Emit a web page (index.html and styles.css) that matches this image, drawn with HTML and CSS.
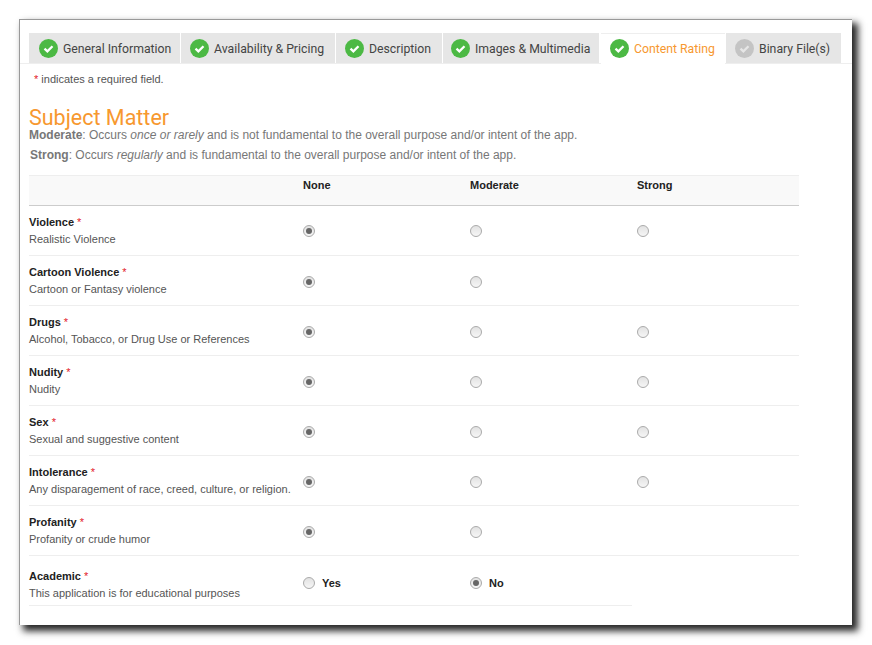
FILE: index.html
```html
<!DOCTYPE html>
<html lang="en">
<head>
    <meta charset="UTF-8">
    <title>Content Rating</title>
    <link rel="stylesheet" href="styles.css">
</head>
<body>
    <div class="window">
        <div class="tabs">
            <div class="tab tab-general"><svg class="check" viewBox="0 0 20 20"><circle cx="10" cy="10" r="10" fill="#4cb944"/><path d="M5.8 10.2l3 2.8 5.4-5.4" fill="none" stroke="#fff" stroke-width="2.4"/></svg>General Information</div>
            <div class="tab tab-pricing"><svg class="check" viewBox="0 0 20 20"><circle cx="10" cy="10" r="10" fill="#4cb944"/><path d="M5.8 10.2l3 2.8 5.4-5.4" fill="none" stroke="#fff" stroke-width="2.4"/></svg>Availability &amp; Pricing</div>
            <div class="tab tab-description"><svg class="check" viewBox="0 0 20 20"><circle cx="10" cy="10" r="10" fill="#4cb944"/><path d="M5.8 10.2l3 2.8 5.4-5.4" fill="none" stroke="#fff" stroke-width="2.4"/></svg>Description</div>
            <div class="tab tab-images"><svg class="check" viewBox="0 0 20 20"><circle cx="10" cy="10" r="10" fill="#4cb944"/><path d="M5.8 10.2l3 2.8 5.4-5.4" fill="none" stroke="#fff" stroke-width="2.4"/></svg>Images &amp; Multimedia</div>
            <div class="tab tab-rating active"><svg class="check" viewBox="0 0 20 20"><circle cx="10" cy="10" r="10" fill="#4cb944"/><path d="M5.8 10.2l3 2.8 5.4-5.4" fill="none" stroke="#fff" stroke-width="2.4"/></svg>Content Rating</div>
            <div class="tab tab-binary"><svg class="check" viewBox="0 0 20 20"><circle cx="10" cy="10" r="10" fill="#c4c4c4"/><path d="M5.8 10.2l3 2.8 5.4-5.4" fill="none" stroke="#e6e6e6" stroke-width="2.4"/></svg>Binary File(s)</div>
        </div>

        <div class="content">
            <p class="required-note"><span class="req">*</span> indicates a required field.</p>
            <h2>Subject Matter</h2>
            <p class="legend legend-moderate"><b>Moderate</b>: Occurs <i>once or rarely</i> and is not fundamental to the overall purpose and/or intent of the app.</p>
            <p class="legend legend-strong"><b>Strong</b>: Occurs <i>regularly</i> and is fundamental to the overall purpose and/or intent of the app.</p>

            <div class="rating-table">
                <div class="row head">
                    <div></div>
                    <div>None</div>
                    <div>Moderate</div>
                    <div>Strong</div>
                </div>

                <div class="row">
                    <div class="subject"><b>Violence <span class="req">*</span></b><span>Realistic Violence</span></div>
                    <div class="cell"><span class="radio on"></span></div>
                    <div class="cell"><span class="radio"></span></div>
                    <div class="cell"><span class="radio"></span></div>
                </div>
                <div class="row">
                    <div class="subject"><b>Cartoon Violence <span class="req">*</span></b><span>Cartoon or Fantasy violence</span></div>
                    <div class="cell"><span class="radio on"></span></div>
                    <div class="cell"><span class="radio"></span></div>
                    <div class="cell"></div>
                </div>
                <div class="row">
                    <div class="subject"><b>Drugs <span class="req">*</span></b><span>Alcohol, Tobacco, or Drug Use or References</span></div>
                    <div class="cell"><span class="radio on"></span></div>
                    <div class="cell"><span class="radio"></span></div>
                    <div class="cell"><span class="radio"></span></div>
                </div>
                <div class="row">
                    <div class="subject"><b>Nudity <span class="req">*</span></b><span>Nudity</span></div>
                    <div class="cell"><span class="radio on"></span></div>
                    <div class="cell"><span class="radio"></span></div>
                    <div class="cell"><span class="radio"></span></div>
                </div>
                <div class="row">
                    <div class="subject"><b>Sex <span class="req">*</span></b><span>Sexual and suggestive content</span></div>
                    <div class="cell"><span class="radio on"></span></div>
                    <div class="cell"><span class="radio"></span></div>
                    <div class="cell"><span class="radio"></span></div>
                </div>
                <div class="row">
                    <div class="subject"><b>Intolerance <span class="req">*</span></b><span>Any disparagement of race, creed, culture, or religion.</span></div>
                    <div class="cell"><span class="radio on"></span></div>
                    <div class="cell"><span class="radio"></span></div>
                    <div class="cell"><span class="radio"></span></div>
                </div>
                <div class="row">
                    <div class="subject"><b>Profanity <span class="req">*</span></b><span>Profanity or crude humor</span></div>
                    <div class="cell"><span class="radio on"></span></div>
                    <div class="cell"><span class="radio"></span></div>
                    <div class="cell"></div>
                </div>
                <div class="row academic">
                    <div class="subject"><b>Academic <span class="req">*</span></b><span>This application is for educational purposes</span></div>
                    <div class="cell"><span class="radio"></span><b>Yes</b></div>
                    <div class="cell"><span class="radio on"></span><b>No</b></div>
                </div>
            </div>
        </div>
    </div>
</body>
</html>
```

FILE: styles.css
```css
html, body {
    height: 100%;
}

body {
    margin: 0;
    padding: 19px 0 0 19px;
    box-sizing: border-box;
    background: #fff;
    font-family: "Liberation Sans", Arial, sans-serif;
    font-size: 11px;
    color: #222;
    overflow: hidden;
}

.window {
    width: 833px;
    height: 606px;
    box-sizing: border-box;
    padding-top: 13px;
    background: #fff;
    border-top: 1px solid #999;
    border-left: 1px solid #999;
    box-shadow: 5px 5px 7px 1px rgba(0,0,0,0.85);
}

.tabs {
    display: flex;
    height: 30px;
    padding-left: 9px;
    border-bottom: 1px solid #eee;
}

.tab {
    display: flex;
    align-items: center;
    box-sizing: border-box;
    height: 30px;
    gap: 5px;
    margin-right: 1px;
    padding-top: 1px;
    padding-left: 9px;
    background: #e6e6e6;
    font-family: Roboto, sans-serif;
    font-size: 12.25px;
    white-space: nowrap;
    color: #444;
}

.check {
    width: 19px;
    height: 19px;
    flex: none;
}

.tab-general { width: 151px; padding-left: 10px; }
.tab-pricing { width: 154px; }
.tab-description { width: 106px; }
.tab-images { width: 156px; margin-right: 2px; padding-left: 8px; }
.tab-rating { width: 124px; }
.tab-binary { width: 115px; }

.tab.active {
    height: 31px;
    padding-top: 0;
    padding-bottom: 1px;
    background: #fff;
    border-top: 1px solid #eee;
    color: #f7982f;
}

.content {
    padding-left: 9px;
}

.required-note {
    margin: 9px 0 0 5px;
    font-size: 11px;
    line-height: 13px;
    color: #555;
}

.req {
    color: #e3202a;
    font-weight: normal;
}

h2 {
    margin: 23.5px 0 1.5px;
    font-family: Roboto, sans-serif;
    font-size: 21.5px;
    font-weight: 400;
    line-height: 15px;
    color: #f7982f;
}

.legend {
    margin: 0;
    font-size: 12px;
    line-height: 19px;
    color: #777;
}

.legend-strong {
    margin-top: 1px;
    padding-left: 1px;
}

.rating-table {
    margin-top: 10px;
}

.row {
    display: grid;
    grid-template-columns: 274px 167px 167px 162px;
    width: 770px;
    height: 50px;
    box-sizing: border-box;
    border-bottom: 1px solid #eee;
}

.row.head {
    height: 31px;
    padding-top: 3px;
    background: #f9f9f9;
    border-top: 1px solid #eee;
    border-bottom: 1px solid #ccc;
    font-size: 11px;
    font-weight: bold;
}

.subject {
    display: flex;
    flex-direction: column;
    gap: 4px;
    padding-top: 10px;
    line-height: 13px;
}

.subject b {
    font-size: 11px;
}

.subject span:not(.req) {
    font-size: 11px;
    color: #555;
}

.cell {
    display: flex;
    align-items: center;
    gap: 7px;
    padding-top: 3px;
    font-size: 11px;
}

.head + .row .cell {
    padding-top: 1px;
}

.row.academic {
    width: 603px;
}

.row.academic .subject {
    padding-top: 14px;
}

.row.academic .cell {
    padding-top: 5px;
}

.radio {
    width: 12px;
    height: 12px;
    box-sizing: border-box;
    flex: none;
    display: flex;
    align-items: center;
    justify-content: center;
    border: 1px solid #aaa;
    border-radius: 50%;
    background: linear-gradient(#e2e2e2, #f6f6f6);
}

.radio.on::before {
    content: "";
    width: 6px;
    height: 6px;
    border-radius: 50%;
    background: #666;
}
```
